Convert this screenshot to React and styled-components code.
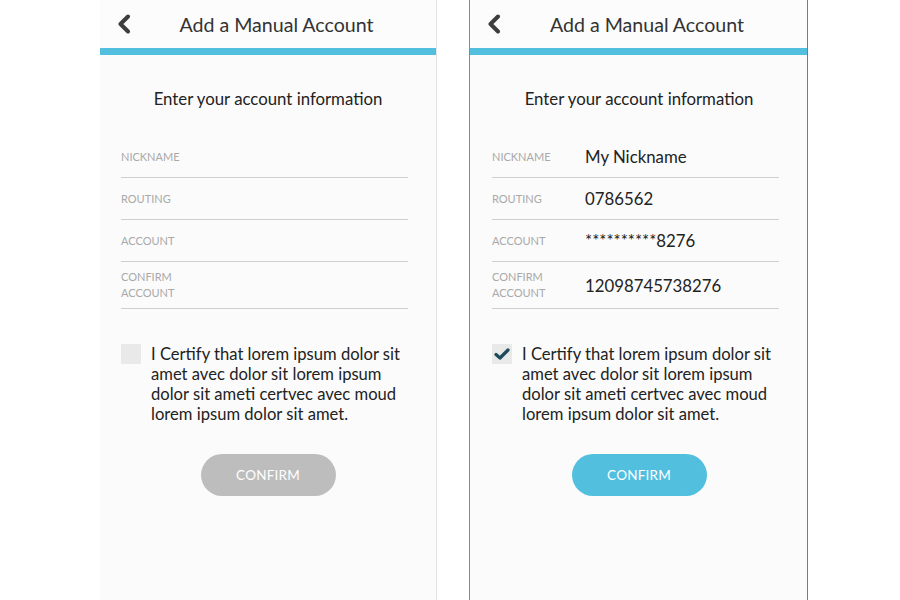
import React from "react";
import styled, { createGlobalStyle } from "styled-components";

const GlobalStyle = createGlobalStyle`
  html, body {
    margin: 0;
    padding: 0;
    background: #ffffff;
    font-family: "Lato", "Liberation Sans", sans-serif;
  }
`;

const color = {
  blue: "#52bfdf",
  text: "#222222",
  label: "#a9a9a9",
  line: "#cfcfcf",
  panel: "#fbfbfb",
};

const Page = styled.div`
  display: flex;
  align-items: stretch;
  gap: 32px;
  height: 600px;
  padding-left: 100px;
  overflow: hidden;
`;

const Phone = styled.div`
  width: ${(p) => (p.$framed ? 337 : 336)}px;
  background: ${color.panel};
  border-right: 1px solid ${(p) => (p.$framed ? "#7a7a7a" : "#e4e4e4")};
  border-left: ${(p) => (p.$framed ? "1px solid #888888" : "none")};
  display: flex;
  flex-direction: column;
`;

const Header = styled.div`
  height: 48px;
  display: flex;
  align-items: center;
  padding-left: 17px;
  background: #fcfcfc;
`;

const Back = styled.svg`
  width: 14px;
  height: 20px;
  flex: none;
`;

const Title = styled.div`
  flex: 1;
  text-align: center;
  padding-right: 14px;
  font-size: 19.6px;
  color: #333333;
`;

const Bar = styled.div`
  height: 7px;
  background: ${color.blue};
`;

const Body = styled.div`
  display: flex;
  flex-direction: column;
  padding: 0 28px 0 ${(p) => (p.$framed ? 22 : 21)}px;
`;

const Heading = styled.div`
  margin-top: 34px;
  text-align: center;
  padding-left: 7px;
  font-size: 16.8px;
  line-height: 20px;
  color: ${color.text};
`;

const Form = styled.div`
  margin-top: 27px;
  display: flex;
  flex-direction: column;
`;

const Row = styled.div`
  box-sizing: border-box;
  display: flex;
  align-items: center;
  min-height: ${(p) => (p.$tall ? 47 : 42)}px;
  padding: ${(p) => (p.$tall ? "7px 0" : "0")};
  border-bottom: 1px solid ${color.line};
`;

const Label = styled.div`
  width: 93px;
  flex: none;
  font-size: 11px;
  line-height: 16px;
  color: ${color.label};
  text-transform: uppercase;
`;

const Value = styled.div`
  font-size: 16.8px;
  color: ${color.text};
`;

const Certify = styled.div`
  margin-top: 35px;
  display: flex;
  gap: 10px;
  align-items: flex-start;
`;

const Box = styled.div`
  width: 20px;
  height: 20px;
  flex: none;
  background: #e9e9e9;
  display: flex;
  align-items: center;
  justify-content: center;
`;

const CertText = styled.div`
  font-size: 16.6px;
  line-height: 20px;
  color: ${color.text};
`;

const Button = styled.button`
  align-self: center;
  margin: 30px 0 0 7px;
  width: 135px;
  height: 42px;
  border: none;
  border-radius: 21px;
  background: ${(p) => (p.$active ? color.blue : "#bdbdbd")};
  color: #ffffff;
  font-family: inherit;
  font-size: 13.5px;
  letter-spacing: 0.2px;
  text-transform: uppercase;
`;

const fields = [
  { label: "Nickname", value: "My Nickname" },
  { label: "Routing", value: "0786562" },
  { label: "Account", value: "**********8276" },
  { label: "Confirm Account", value: "12098745738276", tall: true },
];

const Chevron = () => (
  <Back viewBox="0 0 14 20">
    <polyline
      points="11,2.5 3.5,10 11,17.5"
      fill="none"
      stroke="#3d3d3d"
      strokeWidth="4"
      strokeLinejoin="round"
      strokeLinecap="round"
    />
  </Back>
);

const Check = () => (
  <svg width="16" height="14" viewBox="0 0 16 14">
    <polyline
      points="2,7.5 6,11 14,3"
      fill="none"
      stroke="#1e4b5b"
      strokeWidth="3.2"
      strokeLinecap="round"
      strokeLinejoin="round"
    />
  </svg>
);

const Screen = ({ filled }) => (
  <Phone $framed={filled}>
    <Header>
      <Chevron />
      <Title>Add a Manual Account</Title>
    </Header>
    <Bar />
    <Body $framed={filled}>
      <Heading>Enter your account information</Heading>
      <Form>
        {fields.map((f) => (
          <Row key={f.label} $tall={f.tall}>
            <Label>
              {f.tall ? (
                <>
                  Confirm
                  <br />
                  Account
                </>
              ) : (
                f.label
              )}
            </Label>
            {filled && <Value>{f.value}</Value>}
          </Row>
        ))}
      </Form>
      <Certify>
        <Box>{filled && <Check />}</Box>
        <CertText>
          I Certify that lorem ipsum dolor sit amet avec dolor sit lorem ipsum
          dolor sit ameti certvec avec moud lorem ipsum dolor sit amet.
        </CertText>
      </Certify>
      <Button $active={filled}>Confirm</Button>
    </Body>
  </Phone>
);

const App = () => (
  <>
    <GlobalStyle />
    <Page>
      <Screen />
      <Screen filled />
    </Page>
  </>
);

export default App;
